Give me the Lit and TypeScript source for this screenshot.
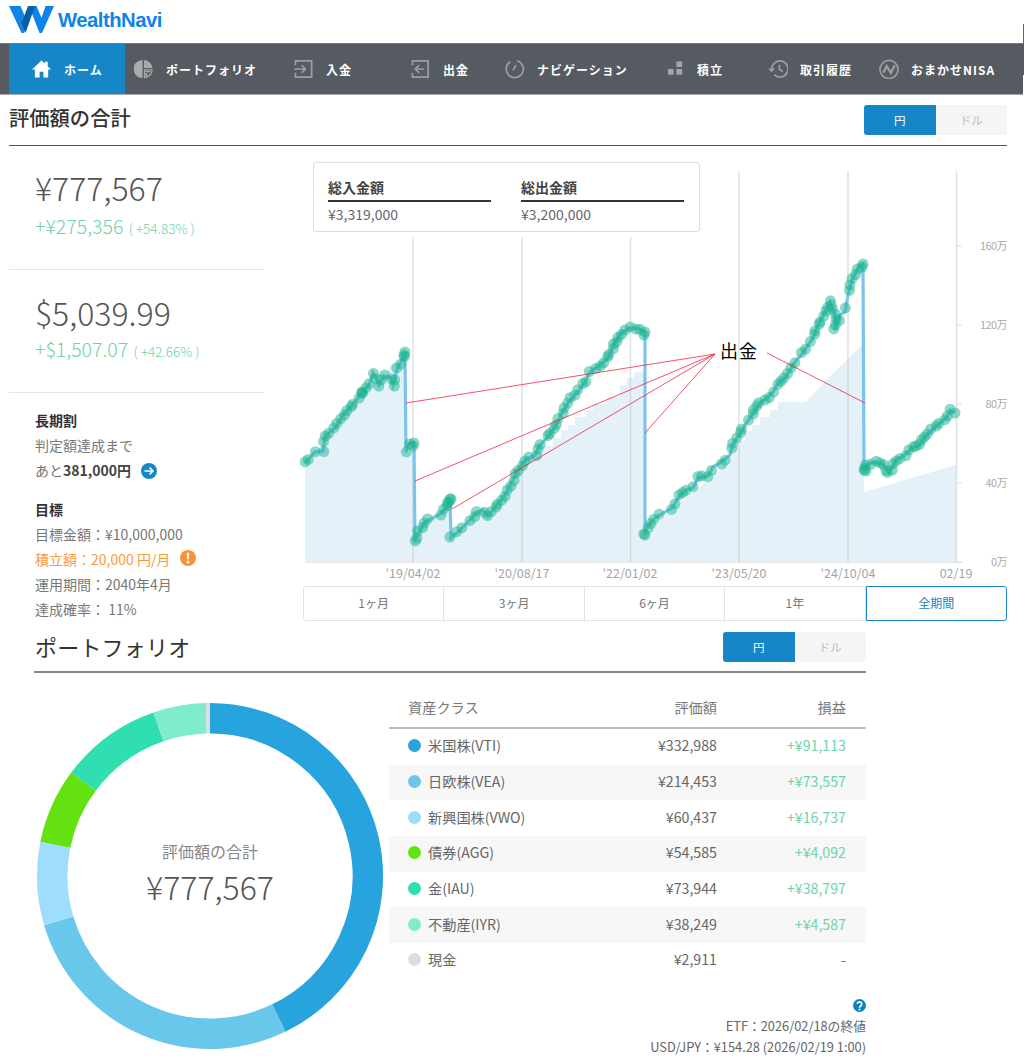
import { LitElement, html, css, svg } from "lit";
import { customElement } from "lit/decorators.js";

const icons: Record<string, unknown> = {
  home: svg`<path fill="#fff" d="M10 1 0 10.500h3V19h5v-6h4v6h5v-8.500h3L16.500 7V2.500h-3v1.700z"/>`,
  pie: svg`<path fill="#aaa" d="M9 0.500A9.500 9.500 0 0 0 9 19.500zM10.500 .5A9.500 9.500 0 0 1 19.500 9h-9z"/><path fill="none" stroke="#aaa" stroke-width="1.300" d="M11 11h8a8.500 8.500 0 0 1-8 8z"/><path fill="#aaa" d="M12 12h5v1.500h-5zM12 14.500h2v3h-2z"/>`,
  in: svg`<path fill="none" stroke="#9a9ea2" stroke-width="1.800" d="M1.500 6V1.500h17v17h-17V14M0 10h12M8 6l4 4-4 4"/>`,
  out: svg`<path fill="none" stroke="#9a9ea2" stroke-width="1.800" d="M1.500 6V1.500h16.500v17H1.500V14"/><path fill="none" stroke="#9a9ea2" stroke-width="1.800" d="M14 10H4.500M8.500 6l-4 4 4 4"/>`,
  dial: svg`<path fill="none" stroke="#9a9ea2" stroke-width="1.800" d="M5.500 2.400A9 9 0 1 0 12.500 1.300"/><path fill="none" stroke="#9a9ea2" stroke-width="1.800" d="M8.500 11l3-5"/>`,
  blocks: svg`<path fill="#a3a6a9" d="M3 10h6v6H3zM12 10h6v6h-6zM12 2h6v6h-6z"/>`,
  history: svg`<path fill="none" stroke="#9a9ea2" stroke-width="1.800" d="M4 10a8.500 8.500 0 1 1 2.500 6"/><path fill="#9a9ea2" d="M0 9.500h7.500L3.800 13.500z"/><path fill="none" stroke="#9a9ea2" stroke-width="1.800" d="M12 5.500V10.500l3.500 2"/>`,
  nisa: svg`<circle cx="10.500" cy="10.500" r="9.500" fill="none" stroke="#9a9ea2" stroke-width="1.800"/><path fill="none" stroke="#9a9ea2" stroke-width="2.600" d="M4.500 14 8 7 12.500 14 16.500 6"/>`,
};

const nav = [
  { t: "ホーム", i: "home", w: 116, pl: 23, active: true },
  { t: "ポートフォリオ", i: "pie", w: 157, pl: 9 },
  { t: "入金", i: "in", w: 117, pl: 12 },
  { t: "出金", i: "out", w: 94, pl: 12 },
  { t: "ナビゲーション", i: "dial", w: 160, pl: 12 },
  { t: "積立", i: "blocks", w: 103, pl: 12 },
  { t: "取引履歴", i: "history", w: 111, pl: 12 },
  { t: "おまかせNISA", i: "nisa", w: 157, pl: 12 },
];

const series: [number, number][] = [
  [305,463],[315,452],[323,451],[325,436],[335,428],[343,415],[354,403],[362,393],[369,385],[373,373],[379,385],[384,376],[391,378],[393,385],[397,369],[403,358],[405,352],[406,452],[408,444],[414,443],[415,541],[416,537],[425,522],[433,518],[440,514],[447,507],[450,499],[451,538],[458,532],[470,520],[477,512],[483,510],[488,517],[495,507],[505,495],[510,485],[518,470],[525,460],[535,455],[540,445],[548,437],[556,425],[562,413],[568,403],[575,395],[583,385],[590,372],[600,365],[608,358],[614,345],[621,333],[630,328],[640,329],[645,332],[645,535],[647,527],[655,518],[665,512],[672,508],[680,495],[687,490],[693,488],[698,478],[708,476],[713,467],[720,463],[730,455],[733,444],[740,434],[745,425],[752,415],[760,403],[768,397],[773,392],[777,385],[785,378],[795,362],[802,354],[808,345],[813,338],[818,325],[825,312],[830,302],[835,315],[835,330],[840,315],[845,312],[848,295],[852,280],[858,268],[863,264],[864,470],[866,465],[875,462],[884,465],[889,473],[896,460],[905,455],[912,448],[920,445],[925,437],[932,430],[940,423],[947,417],[950,410],[955,413],
];

const area =
  "305,562 305,463 315,453 323,452 325,437 335,429 343,416 354,404 362,394 369,386 385,376 391,365 403,362 406,359 406,452 414,452 415,541 425,523 433,519 440,515 447,508 450,505 451,540 458,533 470,521 477,513 483,511 488,518 495,508 505,496 510,486 518,471 525,461 535,456 540,446 553,446 553,438 561,438 561,430 568,430 568,425 575,425 575,417 586,417 586,410 593,410 593,404 607,404 607,397 620,397 620,385 627,385 627,378 634,378 634,372 645,371 645,538 655,525 665,517 680,503 700,487 715,475 730,460 740,441 745,441 745,431 752,431 752,425 760,425 760,417 770,417 770,410 778,410 778,402 806,402 826,380 862,345 864,345 864,492 956,465 956,562";

const grid = [
  { x: 413, top: 237 },
  { x: 522, top: 237 },
  { x: 630.5, top: 237 },
  { x: 739, top: 171 },
  { x: 848, top: 171 },
  { x: 956.5, top: 171 },
];
const xLabels = [
  ["'19/04/02", 413],
  ["'20/08/17", 522],
  ["'22/01/02", 630],
  ["'23/05/20", 739],
  ["'24/10/04", 848],
  ["02/19", 956],
] as [string, number][];
const yLabels = [
  ["160万", 246],
  ["120万", 325],
  ["80万", 404],
  ["40万", 483],
  ["0万", 562],
] as [string, number][];
const redLines = [
  [406, 403, 715, 354],
  [415, 481, 715, 354],
  [452, 509, 715, 354],
  [645, 433, 715, 354],
  [767, 353, 865, 403],
];

function dots(): [number, number][] {
  const out: [number, number][] = [];
  let seed = 7;
  const rnd = () => {
    seed = (seed * 9301 + 49297) % 233280;
    return seed / 233280;
  };
  for (let i = 0; i < series.length - 1; i++) {
    const [x1, y1] = series[i];
    const [x2, y2] = series[i + 1];
    const dx = x2 - x1;
    const dy = y2 - y1;
    if (Math.abs(dx) <= 2 && Math.abs(dy) > 30) {
      out.push([x1, y1], [x1 - 1, y1 + 3]);
      continue;
    }
    const len = Math.hypot(dx, dy);
    const n = Math.max(1, Math.round(len / 5.5));
    for (let k = 0; k < n; k++) {
      const f = k / n;
      if (rnd() < 0.08) continue;
      out.push([x1 + dx * f + (rnd() - 0.5) * 3, y1 + dy * f + (rnd() - 0.5) * 3]);
    }
  }
  out.push(series[series.length - 1]);
  out.push([362, 393], [362, 392], [451, 499], [645, 535], [864, 470], [866, 471]);
  return out;
}

const assets = [
  { n: "米国株(VTI)", v: 332988, pl: "+¥91,113", c: "#27a4dd" },
  { n: "日欧株(VEA)", v: 214453, pl: "+¥73,557", c: "#69c7eb" },
  { n: "新興国株(VWO)", v: 60437, pl: "+¥16,737", c: "#9edefc" },
  { n: "債券(AGG)", v: 54585, pl: "+¥4,092", c: "#63e110" },
  { n: "金(IAU)", v: 73944, pl: "+¥38,797", c: "#2fdfb1" },
  { n: "不動産(IYR)", v: 38249, pl: "+¥4,587", c: "#7feccd" },
  { n: "現金", v: 2911, pl: "-", c: "#dddddd" },
];

function donut() {
  const total = assets.reduce((s, a) => s + a.v, 0);
  const r = 157.8;
  const cx = 174;
  const cy = 174;
  let ang = 0;
  return assets.map((a) => {
    const a0 = ang;
    ang += (a.v / total) * Math.PI * 2;
    const p = (t: number) => `${cx + r * Math.sin(t)} ${cy - r * Math.cos(t)}`;
    const large = ang - a0 > Math.PI ? 1 : 0;
    return svg`<path d="M${p(a0)}A${r} ${r} 0 ${large} 1 ${p(ang)}" fill="none" stroke=${a.c} stroke-width="30.500"/>`;
  });
}

@customElement("app-root")
export class AppRoot extends LitElement {
  static styles = css`
    :host {
      display: block;
      position: relative;
      width: 1024px;
      height: 1057px;
      overflow: hidden;
      background: #fff;
      font-family: "Noto Sans CJK JP", "Noto Sans", sans-serif;
      color: #666;
    }
    .top {
      height: 43px;
      display: flex;
      align-items: center;
      padding-left: 9px;
      gap: 4px;
      box-sizing: border-box;
    }
    .top svg {
      display: block;
      margin-top: -3px;
    }
    .brand {
      font-family: "Liberation Sans", sans-serif;
      font-weight: 700;
      font-size: 20.300px;
      letter-spacing: -0.5px;
      color: #0f84e8;
      margin-top: -2px;
    }
    .artifact {
      position: absolute;
      left: 1023px;
      top: 24px;
      width: 1px;
      height: 20px;
      background: #666;
    }
    .artifact2 {
      position: absolute;
      left: 1023px;
      top: 75px;
      width: 1px;
      height: 20px;
      background: #fff;
    }
    nav {
      height: 52px;
      box-sizing: border-box;
      background: #565b61;
      border-top: 1px solid #777b80;
      border-bottom: 1px solid #a9acb0;
      display: flex;
      padding-left: 9px;
    }
    .nav-item {
      display: flex;
      align-items: center;
      gap: 12px;
      box-sizing: border-box;
      color: #fff;
      font-size: 12px;
      font-weight: 700;
      letter-spacing: 1px;
      white-space: nowrap;
    }
    .nav-item.active {
      background: #1686c8;
    }
    .nav-item svg {
      flex: none;
      display: block;
    }
    .sec-head {
      margin: 0 17px 0 9px;
      height: 51px;
      box-sizing: border-box;
      border-bottom: 1px solid #555;
      display: flex;
      justify-content: space-between;
      padding-top: 10px;
    }
    h1 {
      margin: -1px 0 0;
      font-size: 20.300px;
      line-height: 26px;
      font-weight: 500;
      color: #333;
    }
    .toggle {
      display: flex;
      width: 143px;
      height: 30px;
      border-radius: 3px;
      overflow: hidden;
      font-size: 11.500px;
      line-height: 30px;
      text-align: center;
    }
    .toggle span {
      flex: 1;
      background: #f5f5f5;
      color: #bbb;
    }
    .toggle span.on {
      background: #1686c8;
      color: #fff;
    }
    .main {
      display: flex;
      height: 476px;
    }
    .left {
      width: 255px;
      margin: 0 36px 0 9px;
      flex: none;
    }
    .stat {
      height: 124px;
      box-sizing: border-box;
      border-bottom: 1px solid #e5e5e5;
      padding: 18px 0 0 26px;
      white-space: nowrap;
    }
    .stat.second {
      height: 123px;
      padding-top: 19px;
    }
    .big {
      font-size: 32px;
      line-height: 46px;
      font-weight: 300;
      color: #555;
    }
    .gain {
      font-size: 19.500px;
      line-height: 28px;
      margin-top: 2px;
      color: #6fd3a5;
      font-weight: 300;
    }
    .second .gain {
      margin-top: 0;
    }
    .gain small {
      font-size: 13.500px;
      margin-left: 1px;
    }
    .info {
      padding: 15px 0 0 26px;
      font-size: 14px;
      line-height: 25px;
      color: #777;
      white-space: nowrap;
    }
    .info h3 {
      margin: 0;
      font-size: 14px;
      line-height: 25px;
      font-weight: 700;
      color: #333;
    }
    .info b {
      font-weight: 700;
      color: #444;
    }
    .info .goal {
      margin-top: 14px;
    }
    .info .orange {
      color: #f99a3e;
      display: flex;
      align-items: center;
      gap: 8px;
    }
    .info .line {
      display: flex;
      align-items: center;
      gap: 10px;
    }
    .info .line svg {
      display: block;
    }
    .info .orange svg {
      display: block;
      margin-top: -4px;
    }
    .wide {
      margin-left: 2px;
    }
    .chart-col {
      flex: none;
      width: 724px;
      margin-top: 14px;
    }
    .chart {
      position: relative;
      height: 424px;
    }
    .chart > svg {
      display: block;
    }
    .ax {
      font-size: 12.500px;
      fill: #a5a5a5;
      font-family: "Noto Sans CJK JP", sans-serif;
    }
    .ay {
      font-size: 11px;
      letter-spacing: -0.6px;
      fill: #aaa;
      font-family: "Noto Sans CJK JP", sans-serif;
    }
    .anno {
      font-size: 18px;
      letter-spacing: 1px;
      fill: #000;
      font-family: "Noto Sans CJK JP", sans-serif;
    }
    .totals {
      position: absolute;
      left: 13px;
      top: 2px;
      width: 387px;
      height: 70px;
      box-sizing: border-box;
      background: #fff;
      border: 1px solid #ddd;
      border-radius: 3px;
      padding: 12px 14px 0;
      display: flex;
      gap: 30px;
    }
    .totals > div {
      width: 163px;
    }
    .totals h4 {
      margin: 0;
      font-size: 14px;
      line-height: 24px;
      font-weight: 700;
      color: #444;
      border-bottom: 2px solid #333;
      padding-bottom: 1px;
    }
    .totals p {
      margin: 1px 0 0;
      font-size: 14px;
      line-height: 22px;
      color: #666;
    }
    .range {
      margin: 2px 17px 0 3px;
      display: flex;
      height: 35px;
      box-sizing: border-box;
      font-size: 12px;
      color: #777;
      text-align: center;
    }
    .range span {
      flex: 1;
      line-height: 31px;
      border: 1px solid #e2e2e2;
      border-left: none;
    }
    .range span:first-child {
      border-left: 1px solid #e2e2e2;
      border-radius: 3px 0 0 3px;
    }
    .range span.on {
      border: 1px solid #1686c8;
      border-radius: 0 3px 3px 0;
      color: #1686c8;
    }
    .pf {
      margin-left: 34px;
      width: 832px;
    }
    .pf-head {
      height: 51px;
      box-sizing: border-box;
      border-bottom: 2px solid #888;
      display: flex;
      justify-content: space-between;
      padding-top: 10px;
    }
    h2 {
      margin: -2px 0 0 1px;
      font-size: 22px;
      letter-spacing: 0.2px;
      line-height: 32px;
      font-weight: 400;
      color: #333;
    }
    .pf-body {
      display: grid;
      grid-template-columns: 355px 477px;
    }
    .donut {
      display: grid;
      width: 348px;
      height: 348px;
      margin: 29px 0 0 2px;
      place-items: center;
    }
    .donut > * {
      grid-area: 1 / 1;
    }
    .donut .mid {
      text-align: center;
      margin-top: -4px;
    }
    .donut .cap {
      font-size: 16px;
      line-height: 24px;
      color: #888;
    }
    .donut .val {
      font-size: 32px;
      line-height: 46px;
      color: #555;
      font-weight: 300;
    }
    .tbl {
      margin-top: 18px;
    }
    .row {
      display: grid;
      grid-template-columns: 1fr 100px 129px;
      padding: 0 20px 3px 19px;
      box-sizing: border-box;
      height: 35.700px;
      align-items: center;
      font-size: 14.200px;
      color: #666;
    }
    .row.head {
      height: 38px;
      padding-bottom: 4px;
      border-bottom: 2px solid #bbb;
      color: #777;
    }
    .row:nth-child(odd):not(.head) {
      background: #f7f7f7;
    }
    .row > :nth-child(n + 2) {
      text-align: right;
    }
    .pl {
      color: #6fd3a5;
    }
    .pl.none {
      color: #666;
    }
    .name {
      display: flex;
      align-items: center;
      gap: 7px;
    }
    .dot {
      width: 13px;
      height: 13px;
      border-radius: 50%;
      flex: none;
      margin-top: 1px;
    }
    .note {
      margin-top: 20px;
      text-align: right;
      font-size: 12.800px;
      line-height: 21px;
      color: #666;
    }
    .note svg {
      display: block;
      margin: 0 0 3px auto;
    }
  `;

  render() {
    const pts = series.map((p) => p.join(",")).join(" ");
    return html`
      <div class="top">
        <svg width="45" height="28" viewBox="0 0 45 28">
          <path fill="#0f84e8" d="M0 0h11.500l7 16.500-3.500 10.500h-2.500zM20 0h7.500l5 12L36.500 0H45L33 27h-2.500z" />
          <path fill="#0a5ea8" d="M19 0h7L16.500 27 12.500 17z" />
        </svg>
        <span class="brand">WealthNavi</span>
      </div>
      <nav>
        ${nav.map(
          (n) => html`<div
            class="nav-item ${n.active ? "active" : ""}"
            style="width:${n.w}px;padding-left:${n.pl}px"
          >
            <svg width="20" height="20" viewBox="0 0 21 20">${icons[n.i]}</svg><span>${n.t}</span>
          </div>`
        )}
      </nav>
      <div class="sec-head">
        <h1>評価額の合計</h1>
        <div class="toggle"><span class="on">円</span><span>ドル</span></div>
      </div>
      <div class="main">
        <div class="left">
          <div class="stat">
            <div class="big">¥777,567</div>
            <div class="gain">+¥275,356 <small>( +54.83% )</small></div>
          </div>
          <div class="stat second">
            <div class="big">$5,039.99</div>
            <div class="gain">+$1,507.07 <small>( +42.66% )</small></div>
          </div>
          <div class="info">
            <h3>長期割</h3>
            <div>判定額達成まで</div>
            <div class="line">
              <span>あと<b>381,000円</b></span>
              <svg width="16" height="16" viewBox="0 0 16 16">
                <circle cx="8" cy="8" r="8" fill="#1686c8" />
                <path fill="none" stroke="#fff" stroke-width="1.500" d="M3.500 8h8.500M8.500 4.500 12 8l-3.500 3.500" />
              </svg>
            </div>
            <h3 class="goal">目標</h3>
            <div>目標金額：¥10,000,000</div>
            <div class="orange">
              <span>積立額：20,000 円/月</span>
              <svg class="wide" width="16" height="16" viewBox="0 0 16 16">
                <circle cx="8" cy="8" r="8" fill="#f8933a" />
                <path fill="#fff" d="M6.700 2.800h2.600L8.800 9.500H7.200z" />
                <circle cx="8" cy="12" r="1.500" fill="#fff" />
              </svg>
            </div>
            <div>運用期間：2040年4月</div>
            <div>達成確率： 11%</div>
          </div>
        </div>
        <div class="chart-col">
          <div class="chart">
            <svg width="724" height="424" viewBox="300 160 724 424">
              <polygon points=${area} fill="#e4f1f9" />
              ${grid.map(
                (g) => svg`<line x1=${g.x} x2=${g.x} y1=${g.top} y2="562" stroke="#b9bec2" stroke-opacity=".45" stroke-width="1.500"/>`
              )}
              <line x1="305" x2="962" y1="562.500" y2="562.500" stroke="#e6e6e6" />
              ${yLabels.map(
                ([t, y]) => svg`
                  <line x1="956" x2="962" y1=${y} y2=${y} stroke="#e0e0e0"/>
                  <text class="ay" x="1007" y=${y + 4} text-anchor="end">${t}</text>`
              )}
              ${xLabels.map(
                ([t, x]) => svg`<text class="ax" x=${x} y="577.500" text-anchor="middle">${t}</text>`
              )}
              <polyline points=${pts} fill="none" stroke="#7cc4ee" stroke-width="3.200" />
              ${dots().map(
                ([x, y]) => svg`<circle cx=${x.toFixed(1)} cy=${y.toFixed(1)} r="5.500" fill="#1cb48e" fill-opacity=".5"/>`
              )}
              ${redLines.map(
                ([a, b, c, d]) => svg`<line x1=${a} y1=${b} x2=${c} y2=${d} stroke="#f2243f" stroke-width=".8"/>`
              )}
              <text class="anno" x="720" y="358">出金</text>
            </svg>
            <div class="totals">
              <div><h4>総入金額</h4><p>¥3,319,000</p></div>
              <div><h4>総出金額</h4><p>¥3,200,000</p></div>
            </div>
          </div>
          <div class="range">
            <span>1ヶ月</span><span>3ヶ月</span><span>6ヶ月</span><span>1年</span><span class="on">全期間</span>
          </div>
        </div>
      </div>
      <div class="pf">
        <div class="pf-head">
          <h2>ポートフォリオ</h2>
          <div class="toggle"><span class="on">円</span><span>ドル</span></div>
        </div>
        <div class="pf-body">
          <div class="donut">
            <svg width="348" height="348" viewBox="0 0 348 348">${donut()}</svg>
            <div class="mid">
              <div class="cap">評価額の合計</div>
              <div class="val">¥777,567</div>
            </div>
          </div>
          <div>
            <div class="tbl">
              <div class="row head"><span>資産クラス</span><span>評価額</span><span>損益</span></div>
              ${assets.map(
                (a) => html`<div class="row">
                  <span class="name"><i class="dot" style="background:${a.c}"></i>${a.n}</span>
                  <span>¥${a.v.toLocaleString("en-US")}</span>
                  <span class="pl ${a.pl === "-" ? "none" : ""}">${a.pl}</span>
                </div>`
              )}
            </div>
            <div class="note">
              <svg width="13" height="13" viewBox="0 0 13 13">
                <circle cx="6.500" cy="6.500" r="6.500" fill="#0f7fc4" />
                <path fill="none" stroke="#fff" stroke-width="1.600" d="M4.300 5a2.200 2.200 0 1 1 3.300 2c-.8.500-1.100.800-1.100 1.700" />
                <circle cx="6.500" cy="10.500" r="1" fill="#fff" />
              </svg>
              <div>ETF：2026/02/18の終値</div>
              <div>USD/JPY：¥154.28 (2026/02/19 1:00)</div>
            </div>
          </div>
        </div>
      </div>
      <div class="artifact"></div>
      <div class="artifact2"></div>
    `;
  }
}
